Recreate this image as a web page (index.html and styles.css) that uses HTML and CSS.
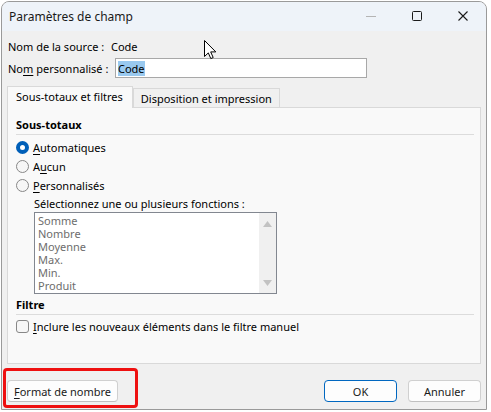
FILE: index.html
```html
<!DOCTYPE html>
<html lang="fr">
<head>
<meta charset="utf-8">
<title>Paramètres de champ</title>
<link rel="stylesheet" href="styles.css">
</head>
<body>
<div class="window">
  <div class="titlebar">
    <span class="title">Paramètres de champ</span>
    <div class="controls">
      <span class="ctl ctl-min"><svg width="12" height="12" viewBox="0 0 12 12"><path d="M1 6.5h10" stroke="#b4b4b4" stroke-width="1"/></svg></span>
      <span class="ctl"><svg width="12" height="12" viewBox="0 0 12 12"><rect x="1.5" y="1.5" width="9" height="9" rx="1" fill="none" stroke="#1a1a1a" stroke-width="1"/></svg></span>
      <span class="ctl"><svg width="12" height="12" viewBox="0 0 12 12"><path d="M1.5 1.5l9 9M10.5 1.5l-9 9" stroke="#1a1a1a" stroke-width="1.1"/></svg></span>
    </div>
  </div>
  <div class="content">
    <div class="field-row">
      <span class="field-label">Nom de la source :</span>
      <span class="field-value">Code</span>
    </div>
    <div class="field-row field-row-input">
      <span class="field-label">No<u>m</u> personnalisé :</span>
      <div class="textbox"><span class="selected">Code</span></div>
    </div>
    <div class="tabs">
      <div class="tab tab-active">Sous-totaux et filtres</div>
      <div class="tab">Disposition et impression</div>
    </div>
    <div class="panel">
      <div class="group-title">Sous-totaux</div>
      <div class="option"><span class="radio radio-checked"></span><span><u>A</u>utomatiques</span></div>
      <div class="option"><span class="radio"></span><span>A<u>u</u>cun</span></div>
      <div class="option"><span class="radio"></span><span><u>P</u>ersonnalisés</span></div>
      <div class="list-label">Sélectionnez une ou plusieurs fonctions :</div>
      <div class="listbox">
        <div class="list-items">
          <div>Somme</div>
          <div>Nombre</div>
          <div>Moyenne</div>
          <div>Max.</div>
          <div>Min.</div>
          <div>Produit</div>
        </div>
        <div class="scrollbar">
          <svg width="9" height="6" viewBox="0 0 9 6"><path d="M0 6L4.5 0L9 6Z" fill="#c2c2c2"/></svg>
          <svg width="9" height="6" viewBox="0 0 9 6"><path d="M0 0L4.5 6L9 0Z" fill="#c2c2c2"/></svg>
        </div>
      </div>
      <div class="group-title group-title-filter">Filtre</div>
      <div class="option option-check"><span class="checkbox"></span><span><u>I</u>nclure les nouveaux éléments dans le filtre manuel</span></div>
    </div>
    <div class="buttons">
      <button class="btn btn-format"><u>F</u>ormat de nombre</button>
      <div class="spacer"></div>
      <button class="btn btn-primary">OK</button>
      <button class="btn">Annuler</button>
    </div>
  </div>
  <div class="highlight"></div>
  <svg class="cursor" width="13" height="20" viewBox="0 0 13 20"><path d="M0.5 0.5V16.5L4.3 12.9L6.8 18.6L9.2 17.5L6.7 11.9H11.8Z" fill="#fff" stroke="#000" stroke-width="1" stroke-linejoin="round"/></svg>
</div>
</body>
</html>
```
FILE: styles.css
```css
html, body {
  margin: 0;
  padding: 0;
}
body {
  width: 491px;
  height: 412px;
  background: #ffffff;
  font-family: "Noto Sans", "Open Sans", sans-serif;
  font-size: 11px;
  line-height: 15px;
  color: #000;
  overflow: hidden;
  white-space: nowrap;
}
u {
  text-decoration-thickness: 1px;
  text-underline-offset: 2px;
}
.window {
  position: relative;
  margin: 1px 0 0 1px;
  width: 486px;
  height: 409px;
  border: 1px solid #9a9a9a;
  border-radius: 8px 8px 0 0;
  background: #f0f0f0;
  display: flex;
  flex-direction: column;
  box-sizing: border-box;
}
.titlebar {
  height: 29px;
  flex: none;
  background: #eef3f9;
  border-radius: 7px 7px 0 0;
  display: flex;
  align-items: center;
  padding-left: 7px;
}
.title {
  flex: 1;
  font-size: 12px;
  color: #1a1a1a;
  padding-bottom: 1px;
}
.controls {
  display: flex;
  height: 100%;
}
.ctl {
  width: 46px;
  display: flex;
  align-items: center;
  justify-content: center;
  padding-bottom: 1px;
}
.content {
  flex: 1;
  display: flex;
  flex-direction: column;
  padding: 7px 5px 0 5px;
}
.field-row {
  display: flex;
  align-items: center;
  height: 16px;
  padding-left: 1px;
}
.field-row .field-label {
  width: 103px;
}
.field-row-input {
  margin-top: 3px;
  height: 22px;
}
.field-row-input .field-label {
  width: 107px;
}
.textbox {
  width: 252px;
  height: 20px;
  box-sizing: border-box;
  border: 1px solid #a8a8a8;
  background: #fff;
  padding: 0 2px;
  display: flex;
  align-items: center;
}
.selected {
  background: #99c9ef;
  line-height: 15px;
}
.tabs {
  display: flex;
  align-items: flex-end;
  margin-top: 7px;
  height: 21px;
  position: relative;
  z-index: 1;
}
.tab {
  height: 19px;
  box-sizing: border-box;
  border: 1px solid #d9d9d9;
  border-bottom: none;
  background: #f0f0f0;
  padding: 0 7px;
  display: flex;
  align-items: center;
}
.tab-active {
  height: 22px;
  margin-bottom: -1px;
  background: #f9f9f9;
  padding: 0 9px 3px 8px;
}
.panel {
  height: 257px;
  box-sizing: border-box;
  border: 1px solid #d9d9d9;
  background: #f9f9f9;
  padding: 9px 6px 0 8px;
}
.group-title {
  font-weight: bold;
  height: 16px;
  line-height: 16px;
  border-bottom: 1px solid #dcdcdc;
  padding-bottom: 1px;
  margin-bottom: 3px;
}
.option {
  display: flex;
  align-items: center;
  height: 19px;
  gap: 4px;
}
.radio {
  width: 13px;
  height: 13px;
  box-sizing: border-box;
  border-radius: 50%;
  border: 1px solid #878787;
  background: #f6f6f6;
}
.radio-checked {
  border: 4px solid #005fb8;
  background: #fff;
}
.list-label {
  margin: 0 0 0 18px;
  height: 17px;
  line-height: 17px;
}
.listbox {
  margin-left: 18px;
  width: 243px;
  height: 82px;
  box-sizing: border-box;
  border: 1px solid #828790;
  background: #fff;
  display: flex;
}
.list-items {
  flex: 1;
  padding: 1px 0 0 3px;
  color: #6d6d6d;
  line-height: 13px;
}
.scrollbar {
  width: 17px;
  background: #f0f0f0;
  display: flex;
  flex-direction: column;
  align-items: center;
  justify-content: space-between;
  padding: 8px 0 7px;
  box-sizing: border-box;
}
.group-title-filter {
  margin-top: 3px;
}
.option-check {
  margin-top: 0;
  height: 17px;
}
.checkbox {
  width: 13px;
  height: 13px;
  box-sizing: border-box;
  border: 1px solid #878787;
  border-radius: 3px;
  background: #f6f6f6;
}
.buttons {
  display: flex;
  align-items: center;
  margin-top: 16px;
}
.spacer {
  flex: 1;
}
.btn {
  font-family: inherit;
  font-size: 11px;
  color: #1a1a1a;
  height: 22px;
  width: 73px;
  box-sizing: border-box;
  background: #fdfdfd;
  border: 1px solid #d0d0d0;
  border-bottom-color: #c0c0c0;
  border-radius: 4px;
  padding: 0;
  margin-left: 11px;
}
.btn-format {
  width: 111px;
  margin-left: 0;
}
.btn-primary {
  border: 1px solid #0067c0;
}
.highlight {
  position: absolute;
  left: 1px;
  top: 366px;
  width: 135px;
  height: 40px;
  box-sizing: border-box;
  border: 3px solid #ee1010;
  border-radius: 4px;
}
.cursor {
  position: absolute;
  left: 202px;
  top: 38px;
}
```
